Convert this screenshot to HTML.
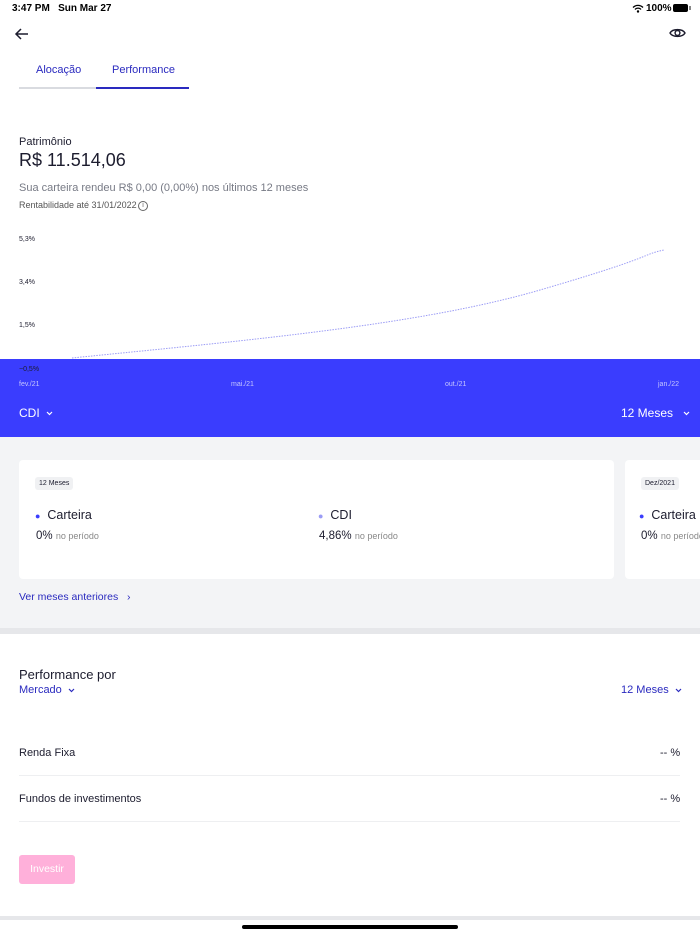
<!DOCTYPE html>
<html><head><meta charset="utf-8"><style>
*{margin:0;padding:0;box-sizing:border-box}
body{width:700px;height:934px;position:relative;background:#fff;font-family:"Liberation Sans",sans-serif;overflow:hidden;color:#1c1c2e}
.a{position:absolute;white-space:nowrap}
.blue{color:#2a2abf}
.ch{display:inline-block;vertical-align:middle;margin-left:6px}
</style></head><body>
<div class="a" style="left:12px;top:3px;font-size:10px;font-weight:bold;color:#000">3:47 PM&nbsp;&nbsp;&nbsp;Sun Mar 27</div>
<div class="a" style="left:646px;top:3px;font-size:10px;font-weight:bold;color:#000">100%</div>
<svg class="a" style="left:632px;top:4px" width="12" height="9" viewBox="0 0 12 9"><path d="M1 3.5a7 7 0 0 1 10 0M3 5.5a4 4 0 0 1 6 0" stroke="#000" stroke-width="1.3" fill="none"/><circle cx="6" cy="7.5" r="1.2"/></svg>
<div class="a" style="left:673px;top:4px;width:15px;height:8px;background:#000;border-radius:2px"></div>
<div class="a" style="left:689px;top:6px;width:1.5px;height:4px;background:#888"></div>
<svg class="a" style="left:14px;top:27px" width="16" height="14" viewBox="0 0 16 14"><path d="M14 7H2M7 2L2 7l5 5" stroke="#1c1c2e" stroke-width="1.5" fill="none"/></svg>
<svg class="a" style="left:669px;top:26px" width="17" height="14" viewBox="0 0 17 14"><path d="M1 7C3.5 2.5 13.5 2.5 16 7C13.5 11.5 3.5 11.5 1 7Z" stroke="#1c1c2e" stroke-width="1.4" fill="none"/><circle cx="8.5" cy="7" r="2.4" stroke="#1c1c2e" stroke-width="1.4" fill="none"/></svg>
<div class="a blue" style="left:36px;top:64px;font-size:11px">Alocação</div>
<div class="a blue" style="left:112px;top:64px;font-size:11px">Performance</div>
<div class="a" style="left:19px;top:87px;width:77px;height:2px;background:#d9dbe0"></div>
<div class="a" style="left:96px;top:87px;width:93px;height:2px;background:#2a2abf"></div>
<div class="a" style="left:19px;top:136px;font-size:11px">Patrimônio</div>
<div class="a" style="left:19px;top:150px;font-size:18px">R$ 11.514,06</div>
<div class="a" style="left:19px;top:182px;font-size:11px;color:#777a85">Sua carteira rendeu R$ 0,00 (0,00%) nos últimos 12 meses</div>
<div class="a" style="left:19px;top:200px;font-size:9px;color:#555">Rentabilidade até 31/01/2022</div>
<div class="a" style="left:138px;top:201px;width:10px;height:10px;border:1px solid #666;border-radius:50%;font-size:7px;text-align:center;line-height:8px;color:#666">i</div>
<div class="a" style="left:19px;top:236px;font-size:7px">5,3%</div>
<div class="a" style="left:19px;top:279px;font-size:7px">3,4%</div>
<div class="a" style="left:19px;top:322px;font-size:7px">1,5%</div>
<div class="a" style="left:0;top:359px;width:700px;height:78px;background:#3a3dfe"></div>
<div class="a" style="left:19px;top:366px;font-size:7px">−0,5%</div>
<svg class="a" style="left:0;top:240px" width="700" height="125"><path d="M72 118 C250 100 420 85 540 50 S640 15 664 10" stroke="#9b9cf5" stroke-width="1" stroke-dasharray="1.5 1.2" fill="none"/></svg>
<div class="a" style="left:19px;top:381px;font-size:7px;color:#c5c6ff">fev./21</div>
<div class="a" style="left:231px;top:381px;font-size:7px;color:#c5c6ff">mai./21</div>
<div class="a" style="left:445px;top:381px;font-size:7px;color:#c5c6ff">out./21</div>
<div class="a" style="left:658px;top:381px;font-size:7px;color:#c5c6ff">jan./22</div>
<div class="a" style="left:19px;top:406px;font-size:12px;color:#fff">CDI<svg class="ch" width="7" height="5" viewBox="0 0 7 5"><path d="M1 1l2.5 2.5L6 1" stroke="#fff" stroke-width="1.2" fill="none"/></svg></div>
<div class="a" style="left:621px;top:406px;font-size:12px;color:#fff">12 Meses<svg class="ch" style="margin-left:10px" width="7" height="5" viewBox="0 0 7 5"><path d="M1 1l2.5 2.5L6 1" stroke="#fff" stroke-width="1.2" fill="none"/></svg></div>
<div class="a" style="left:0;top:437px;width:700px;height:191px;background:#f3f4f6"></div>
<div class="a" style="left:19px;top:460px;width:595px;height:119px;background:#fff;border-radius:4px"></div>
<div class="a" style="left:625px;top:460px;width:80px;height:119px;background:#fff;border-radius:4px"></div>
<div class="a" style="left:35px;top:477px;padding:3px 4px;background:#f0f1f3;border-radius:3px;font-size:7px">12 Meses</div>
<div class="a" style="left:641px;top:477px;padding:3px 4px;background:#f0f1f3;border-radius:3px;font-size:7px">Dez/2021</div>
<div class="a" style="left:35px;top:508px;font-size:12.5px"><span style="color:#3a3dfe;font-size:9px">●</span>&nbsp;&nbsp;Carteira</div>
<div class="a" style="left:318px;top:508px;font-size:12.5px"><span style="color:#9b9cf5;font-size:9px">●</span>&nbsp;&nbsp;CDI</div>
<div class="a" style="left:639px;top:508px;font-size:12.5px"><span style="color:#3a3dfe;font-size:9px">●</span>&nbsp;&nbsp;Carteira</div>
<div class="a" style="left:36px;top:530px;font-size:11.5px">0% <span style="font-size:9px;color:#888">no período</span></div>
<div class="a" style="left:319px;top:530px;font-size:11.5px">4,86% <span style="font-size:9px;color:#888">no período</span></div>
<div class="a" style="left:641px;top:530px;font-size:11.5px">0% <span style="font-size:9px;color:#888">no período</span></div>
<div class="a blue" style="left:19px;top:591px;font-size:10.5px">Ver meses anteriores&nbsp;&nbsp;&nbsp;›</div>
<div class="a" style="left:0;top:628px;width:700px;height:6px;background:#e6e7ea"></div>
<div class="a" style="left:19px;top:667px;font-size:13px">Performance por</div>
<div class="a blue" style="left:19px;top:684px;font-size:11px">Mercado<svg class="ch" width="7" height="5" viewBox="0 0 7 5"><path d="M1 1l2.5 2.5L6 1" stroke="#2a2abf" stroke-width="1.2" fill="none"/></svg></div>
<div class="a blue" style="left:621px;top:684px;font-size:11px">12 Meses<svg class="ch" width="7" height="5" viewBox="0 0 7 5"><path d="M1 1l2.5 2.5L6 1" stroke="#2a2abf" stroke-width="1.2" fill="none"/></svg></div>
<div class="a" style="left:19px;top:747px;font-size:11px">Renda Fixa</div>
<div class="a" style="left:660px;top:747px;font-size:11px">-- %</div>
<div class="a" style="left:19px;top:775px;width:661px;height:1px;background:#eeeff1"></div>
<div class="a" style="left:19px;top:793px;font-size:11px">Fundos de investimentos</div>
<div class="a" style="left:660px;top:793px;font-size:11px">-- %</div>
<div class="a" style="left:19px;top:821px;width:661px;height:1px;background:#eeeff1"></div>
<div class="a" style="left:19px;top:855px;width:56px;height:29px;background:#ffb0da;border-radius:3px;color:#fff;font-size:10.5px;text-align:center;line-height:29px">Investir</div>
<div class="a" style="left:0;top:916px;width:700px;height:4px;background:#e6e7ea"></div>
<div class="a" style="left:242px;top:925px;width:216px;height:4px;background:#000;border-radius:2px"></div>
</body></html>
